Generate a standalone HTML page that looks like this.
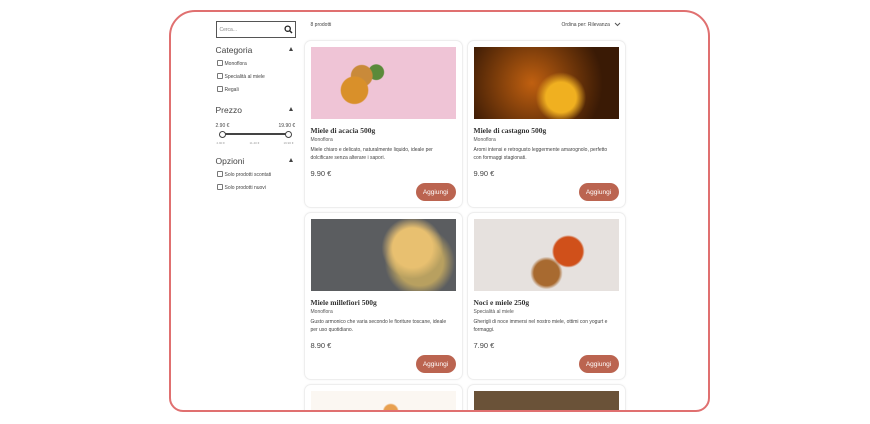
<!DOCTYPE html>
<html><head><meta charset="utf-8"><style>
*{box-sizing:border-box;margin:0;padding:0}
html,body{width:870px;height:424px;overflow:hidden}
body{background:#fff;font-family:"Liberation Sans",sans-serif;color:#333;position:relative}
.frame{position:absolute;left:169px;top:10px;width:541px;height:402px;border:2.5px solid #e07070;border-radius:26px 26px 14px 14px;overflow:hidden}
.a{position:absolute}
.s{font-size:5px;color:#444}
.h{font-size:8.5px;color:#444}
.cb{position:absolute;width:6px;height:6px;border:1px solid #777;border-radius:1px}
.tri{position:absolute;width:0;height:0;border-left:2.5px solid transparent;border-right:2.5px solid transparent;border-bottom:4px solid #444}
.card{position:absolute;width:159px;height:168px;border:1px solid #eee;border-radius:7px;background:#fff;box-shadow:0 0 2px rgba(0,0,0,.05)}
.img{position:absolute;left:6px;top:6px;width:145px;height:72px}
.t{position:absolute;left:6px;top:85px;font-family:"Liberation Serif",serif;font-weight:bold;font-size:7.5px;color:#333}
.c{position:absolute;left:6px;top:96px;font-size:5px;color:#555}
.d{position:absolute;left:6px;top:105px;width:142px;font-size:5px;line-height:8px;color:#444}
.p{position:absolute;left:6px;top:128px;font-size:7.5px;color:#444}
.b{position:absolute;left:111px;top:142px;width:40px;height:18px;border-radius:9px;background:#bb6450}
.b span{position:absolute;left:0;right:0;top:6px;text-align:center;color:#fff;font-size:6.5px;line-height:7px}
</style></head><body>
<div class="frame">
<div style="position:absolute;left:-171.5px;top:-12.5px;width:870px;height:424px">
<div class="a" style="left:216px;top:21px;width:80px;height:17px;border:1px solid #555"></div>
<div class="a s" style="left:220px;top:27px;color:#888">Cerca...</div>
<svg class="a" style="left:284px;top:25px" width="9" height="9" viewBox="0 0 9 9"><circle cx="3.7" cy="3.7" r="2.6" fill="none" stroke="#222" stroke-width="1.3"/><path d="M5.6 5.6L8 8" stroke="#222" stroke-width="1.5"/></svg>
<div class="a h" style="left:216px;top:45px">Categoria</div><div class="tri" style="left:289px;top:47px"></div>
<div class="cb" style="left:217px;top:60px"></div><div class="a s" style="left:225px;top:61px">Monoflora</div>
<div class="cb" style="left:217px;top:73px"></div><div class="a s" style="left:225px;top:74px">Specialità al miele</div>
<div class="cb" style="left:217px;top:86px"></div><div class="a s" style="left:225px;top:87px">Regali</div>
<div class="a h" style="left:216px;top:105px">Prezzo</div><div class="tri" style="left:289px;top:107px"></div>
<div class="a s" style="left:216px;top:123px">2.90 €</div><div class="a s" style="left:279px;top:123px">19.90 €</div>
<div class="a" style="left:222px;top:133px;width:66px;height:2px;background:#444"></div>
<div class="a" style="left:219px;top:131px;width:7px;height:7px;border:1px solid #444;border-radius:50%;background:#fff"></div>
<div class="a" style="left:285px;top:131px;width:7px;height:7px;border:1px solid #444;border-radius:50%;background:#fff"></div>
<div class="a" style="left:217px;top:141px;font-size:3px;color:#999">2.90 €</div>
<div class="a" style="left:250px;top:141px;font-size:3px;color:#999">11.40 €</div>
<div class="a" style="left:284px;top:141px;font-size:3px;color:#999">19.90 €</div>
<div class="a h" style="left:216px;top:156px">Opzioni</div><div class="tri" style="left:289px;top:158px"></div>
<div class="cb" style="left:217px;top:171px"></div><div class="a s" style="left:225px;top:172px">Solo prodotti scontati</div>
<div class="cb" style="left:217px;top:184px"></div><div class="a s" style="left:225px;top:185px">Solo prodotti nuovi</div>

<div class="a s" style="left:311px;top:22px">8 prodotti</div>
<div class="a s" style="left:562px;top:22px">Ordina per: Rilevanza</div>
<svg class="a" style="left:614px;top:22px" width="7" height="5"><path d="M1 1L3.5 3.5L6 1" stroke="#555" fill="none"/></svg>

<div class="card" style="left:304px;top:40px"><div class="img" style="background:radial-gradient(circle at 30% 60%,#d9902a 0 12%,transparent 13%),radial-gradient(circle at 35% 40%,#c98a3a 0 10%,transparent 11%),radial-gradient(circle at 45% 35%,#5a8a3a 0 8%,transparent 9%),#efc4d6"></div>
<div class="t">Miele di acacia 500g</div><div class="c">Monoflora</div><div class="d">Miele chiaro e delicato, naturalmente liquido, ideale per dolcificare senza alterare i sapori.</div><div class="p">9.90 €</div><div class="b"><span>Aggiungi</span></div></div>

<div class="card" style="left:467px;top:40px"><div class="img" style="background:radial-gradient(circle at 60% 70%,#f0b020 0 15%,transparent 25%),radial-gradient(circle at 40% 50%,#c06010,#3a1a05 75%)"></div>
<div class="t">Miele di castagno 500g</div><div class="c">Monoflora</div><div class="d">Aromi intensi e retrogusto leggermente amarognolo, perfetto con formaggi stagionati.</div><div class="p">9.90 €</div><div class="b"><span>Aggiungi</span></div></div>

<div class="card" style="left:304px;top:212px"><div class="img" style="background:radial-gradient(circle at 70% 40%,#e8c070 0 18%,transparent 28%),radial-gradient(circle at 75% 60%,#b8a060 0 20%,transparent 30%),#5b5d60"></div>
<div class="t">Miele millefiori 500g</div><div class="c">Monoflora</div><div class="d">Gusto armonico che varia secondo le fioriture toscane, ideale per uso quotidiano.</div><div class="p">8.90 €</div><div class="b"><span>Aggiungi</span></div></div>

<div class="card" style="left:467px;top:212px"><div class="img" style="background:radial-gradient(circle at 65% 45%,#d0501a 0 14%,transparent 16%),radial-gradient(circle at 50% 75%,#a86a30 0 14%,transparent 18%),#e6e1de"></div>
<div class="t">Noci e miele 250g</div><div class="c">Specialità al miele</div><div class="d">Gherigli di noce immersi nel nostro miele, ottimi con yogurt e formaggi.</div><div class="p">7.90 €</div><div class="b"><span>Aggiungi</span></div></div>

<div class="card" style="left:304px;top:384px;height:40px"><div class="img" style="height:34px;background:radial-gradient(circle at 55% 60%,#e8a050 0 8%,transparent 10%),#fbf7f2"></div></div>
<div class="card" style="left:467px;top:384px;height:40px"><div class="img" style="height:34px;background:#6a5238"></div></div>
</div></div>
</body></html>
